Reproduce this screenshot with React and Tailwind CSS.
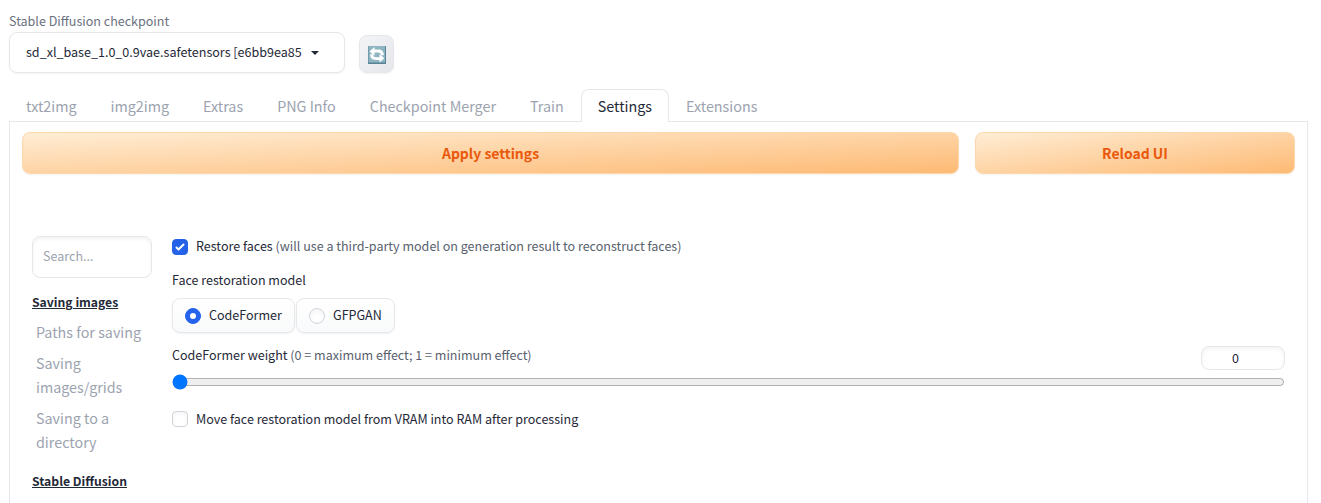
import { useState } from "react";
import clsx from "clsx";

const TABS = ["txt2img", "img2img", "Extras", "PNG Info", "Checkpoint Merger", "Train", "Settings", "Extensions"];

function RefreshIcon() {
  return (
    <svg viewBox="0 0 18 18" className="w-[18px] h-[18px]">
      <rect width="18" height="18" fill="#568396" />
      <rect x="0.5" width="16.5" height="16.5" fill="#8fb4c2" />
      <path d="M1.5 5.5 6.5 1v2.600h3.500c4 0 5.800 2 5.800 5.700h-2.800c0-2-1-2.900-3-2.900H6.500v3.400z" fill="#fff" />
      <path d="M16.300 12.300 11.500 16.600V14H8c-4 0-5.800-2-5.800-5.700H5c0 2 1 2.900 3 2.900h3.500V7.900z" fill="#fff" />
    </svg>
  );
}

function PrimaryButton({ className, children }) {
  return (
    <button className={clsx("h-[42px] rounded-lg border border-[#fed7aa] bg-[linear-gradient(to_bottom_right,#ffedd5,#fdba74)] text-[13.95px] font-bold text-[#ea580c] shadow-[0_1px_2px_0_rgba(0,0,0,0.05)] leading-[24px]", className)}>
      {children}
    </button>
  );
}

function Checkbox({ checked, onChange, className, children }) {
  return (
    <label className="flex items-center gap-2 h-5 text-[12.54px] leading-5">
      <input type="checkbox" className="sr-only" checked={checked} onChange={onChange} />
      <span className={clsx("w-4 h-4 rounded-[4px] border shadow-[inset_0_2px_4px_0_rgba(0,0,0,0.05)]", checked ? "bg-[#2563eb] border-[#2563eb]" : "bg-white border-[#d1d5db]")}>
        {checked && (
          <svg viewBox="0 0 16 16" fill="white" className="w-4 h-4 -m-px">
            <path d="M12.207 4.793a1 1 0 010 1.414l-5 5a1 1 0 01-1.414 0l-2-2a1 1 0 011.414-1.414L6.5 9.086l4.293-4.293a1 1 0 011.414 0z" />
          </svg>
        )}
      </span>
      <span className={clsx("whitespace-nowrap", className)}>{children}</span>
    </label>
  );
}

function RadioCard({ label, checked, onChange, className }) {
  return (
    <label className={clsx("flex items-center gap-2 h-[35px] pl-3 rounded-lg border border-[#e5e7eb] bg-[linear-gradient(to_top,#f9fafb,#ffffff)] text-[12.54px] leading-5 shadow-[0_1px_2px_0_rgba(0,0,0,0.05)]", className)}>
      <input type="radio" name="face-model" className="sr-only" checked={checked} onChange={onChange} />
      <span className={clsx("flex items-center justify-center w-4 h-4 rounded-full border", checked ? "bg-[#2563eb] border-[#2563eb]" : "bg-white border-[#d1d5db] shadow-[inset_0_2px_4px_0_rgba(0,0,0,0.05)]")}>
        {checked && <span className="w-1.5 h-1.5 rounded-full bg-white" />}
      </span>
      <span className="pb-px">{label}</span>
    </label>
  );
}

function Info({ children }) {
  return <span className="text-[#58616e]">{children}</span>;
}

export default function App() {
  const [tab, setTab] = useState("Settings");
  const [restore, setRestore] = useState(true);
  const [toRam, setToRam] = useState(false);
  const [model, setModel] = useState("CodeFormer");
  const [weight, setWeight] = useState(0);

  return (
    <div className="h-[503px] w-[1308px] pl-[9px] pt-[11px] overflow-hidden flex flex-col bg-white text-[#1f2937] font-['Noto_Sans_CJK_SC',sans-serif]">
      {/* Quick settings */}
      <div className="flex items-end">
        <div className="w-[336px]">
          <div className="h-[21px] text-[12.54px] leading-5 text-[#6b7280]">Stable Diffusion checkpoint</div>
          <div className="flex items-center h-[41px] pl-4 rounded-lg border border-[#e5e7eb] text-[12.56px] leading-5 shadow-[0_1px_2px_0_rgba(0,0,0,0.05)]">
            <span className="w-[285px] pb-0.5">sd_xl_base_1.0_0.9vae.safetensors [e6bb9ea85</span>
            <svg viewBox="0 0 8 4" className="w-2 h-1">
              <path d="M0 0h8L4 4z" fill="#1f2937" />
            </svg>
          </div>
        </div>
        <button className="flex items-center justify-center w-[35px] h-[38px] ml-[14px] pt-px rounded-lg border border-[#e5e7eb] bg-[linear-gradient(to_bottom_right,#f3f4f6,#e5e7eb)] shadow-[0_1px_2px_0_rgba(0,0,0,0.05)]">
          <RefreshIcon />
        </button>
      </div>

      {/* Tabs */}
      <div className="flex h-[33px] mt-4 border-b border-[#e5e7eb] text-[14.33px] leading-6">
        {TABS.map((name) => (
          <button
            key={name}
            onClick={() => setTab(name)}
            className={clsx("h-[33px] px-4 pb-px border border-b-0 rounded-t-lg whitespace-nowrap", name === tab ? "bg-white border-[#e5e7eb]" : "border-transparent text-[#9ca3af]")}
          >
            {name}
          </button>
        ))}
      </div>

      <div className="flex-1 border-x border-[#e5e7eb] px-3 pt-[10px]">
        <div className="flex gap-4">
          <PrimaryButton className="w-[937px]">Apply settings</PrimaryButton>
          <PrimaryButton className="w-[320px]">Reload UI</PrimaryButton>
        </div>

        <div className="flex gap-5 mt-[62px] pl-[10px]">
          {/* Section list */}
          <div className="w-[120px] shrink-0 text-[14.32px] leading-6 text-[#9ca3af]">
            <input
              placeholder="Search..."
              className="block w-full h-[42px] px-[10px] pb-1 rounded-lg border border-[#e5e7eb] text-[12.54px] leading-5 placeholder:text-[#9ca3af] shadow-[inset_0_2px_4px_0_rgba(0,0,0,0.05)]"
            />
            <div className="mt-[14px] text-[12.2px] leading-5 font-bold underline text-[#1f2937]">Saving images</div>
            <div className="flex flex-col gap-[7px] mt-2 pl-1">
              <div>Paths for saving</div>
              <div>Saving images/grids</div>
              <div>Saving to a directory</div>
            </div>
            <div className="mt-[17px] text-[12.2px] leading-5 font-bold underline text-[#1f2937]">Stable Diffusion</div>
          </div>

          {/* Face restoration */}
          <div className="w-[1113px] text-[12.54px] leading-5">
            <div className="pt-px">
              <Checkbox className="pb-0.5" checked={restore} onChange={() => setRestore(!restore)}>
                Restore faces <Info>(will use a third-party model on generation result to reconstruct faces)</Info>
              </Checkbox>
            </div>
            <div className="mt-[13px]">Face restoration model</div>
            <div className="flex gap-px mt-2">
              <RadioCard label="CodeFormer" className="w-[123px]" checked={model === "CodeFormer"} onChange={() => setModel("CodeFormer")} />
              <RadioCard label="GFPGAN" className="w-[99px]" checked={model === "GFPGAN"} onChange={() => setModel("GFPGAN")} />
            </div>
            <div className="flex justify-between h-[25px] mt-3">
              <div>
                CodeFormer weight <Info>(0 = maximum effect; 1 = minimum effect)</Info>
              </div>
              <input
                value={weight}
                onChange={(e) => setWeight(e.target.value)}
                className="w-[84px] h-6 mt-px pr-[15px] pb-0.5 rounded-lg border border-[#e5e7eb] text-center text-[12.54px] shadow-[inset_0_2px_4px_0_rgba(0,0,0,0.05)]"
              />
            </div>
            <input type="range" min="0" max="1" step="0.01" value={weight} onChange={(e) => setWeight(e.target.value)} className="block w-[1113px] h-4 mt-1" />
            <div className="mt-[19px]">
              <Checkbox checked={toRam} onChange={() => setToRam(!toRam)}>
                Move face restoration model from VRAM into RAM after processing
              </Checkbox>
            </div>
          </div>
        </div>
      </div>
    </div>
  );
}
